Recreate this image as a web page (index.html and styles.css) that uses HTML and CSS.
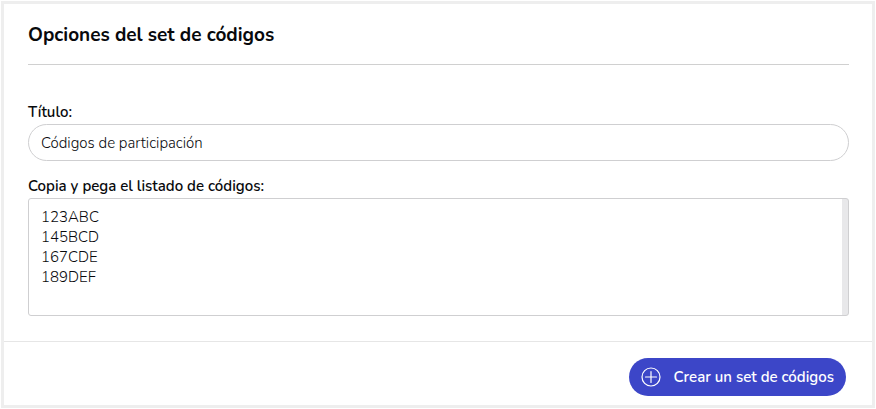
FILE: index.html
```html
<!DOCTYPE html>
<html lang="es">
<head>
    <meta charset="UTF-8">
    <meta name="viewport" content="width=device-width, initial-scale=1.0">
    <title>Opciones del set de códigos</title>
    <link rel="stylesheet" href="styles.css">
</head>
<body>
    <form class="panel">
        <!-- Opciones -->
        <div class="panel-body">
            <h1 class="panel-title">Opciones del set de códigos</h1>

            <div class="field">
                <label for="titulo">Título:</label>
                <input type="text" id="titulo" class="text-input" value="Códigos de participación">
            </div>

            <div class="field">
                <label for="codigos">Copia y pega el listado de códigos:</label>
                <textarea id="codigos" class="code-list" spellcheck="false">123ABC
145BCD
167CDE
189DEF</textarea>
            </div>
        </div>

        <!-- Acciones -->
        <div class="panel-footer">
            <button type="button" class="btn-create">
                <svg class="icon" viewBox="0 0 20 20" aria-hidden="true">
                    <circle cx="10" cy="10" r="9"/>
                    <path d="M10 4.5v11M4.5 10h11"/>
                </svg>
                <span>Crear un set de códigos</span>
            </button>
        </div>
    </form>
</body>
</html>
```

FILE: styles.css
```css
* {
    box-sizing: border-box;
}

body {
    margin: 1px;
    background: #fff;
    color: #08090c;
    font-family: Nunito, "Open Sans", sans-serif;
    font-size: 15px;
    line-height: 20px;
}

.panel {
    border: 3px solid #eee;
}

/* Contenido */
.panel-body {
    padding: 17px 23px 25px 24px;
}

.panel-title {
    margin: 0 0 37px;
    padding-bottom: 15px;
    border-bottom: 1px solid #d0d0d0;
    font-size: 19px;
    line-height: 28px;
    font-weight: 700;
}

.field + .field {
    margin-top: 15px;
}

.field label {
    display: block;
    margin-bottom: 2px;
    font-weight: 600;
}

.text-input,
.code-list {
    display: block;
    width: 100%;
    border: 1px solid #cfcfd1;
    background: #fff;
    color: inherit;
    font: inherit;
    font-weight: 300;
    outline: none;
}

.text-input {
    height: 37px;
    padding: 0 12px;
    border-radius: 19px;
}

.code-list {
    height: 118px;
    padding: 8px 12px;
    border-radius: 3px;
    resize: none;
    /* carril de desplazamiento a la derecha */
    background: linear-gradient(#e8e8ea, #e8e8ea) right / 6px 100% no-repeat #fff;
}

/* Pie con el botón */
.panel-footer {
    display: flex;
    justify-content: flex-end;
    padding: 16px 26px 9px;
    border-top: 1px solid #e6e6e6;
}

.btn-create {
    display: flex;
    align-items: center;
    gap: 12px;
    height: 38px;
    padding: 0 12px;
    border: none;
    border-radius: 19px;
    background: #3c46c8;
    color: #fff;
    font: inherit;
    font-weight: 600;
    cursor: pointer;
}

.icon {
    width: 20px;
    height: 20px;
    fill: none;
    stroke: #fff;
    stroke-width: 1.2;
    stroke-linecap: round;
}
```
